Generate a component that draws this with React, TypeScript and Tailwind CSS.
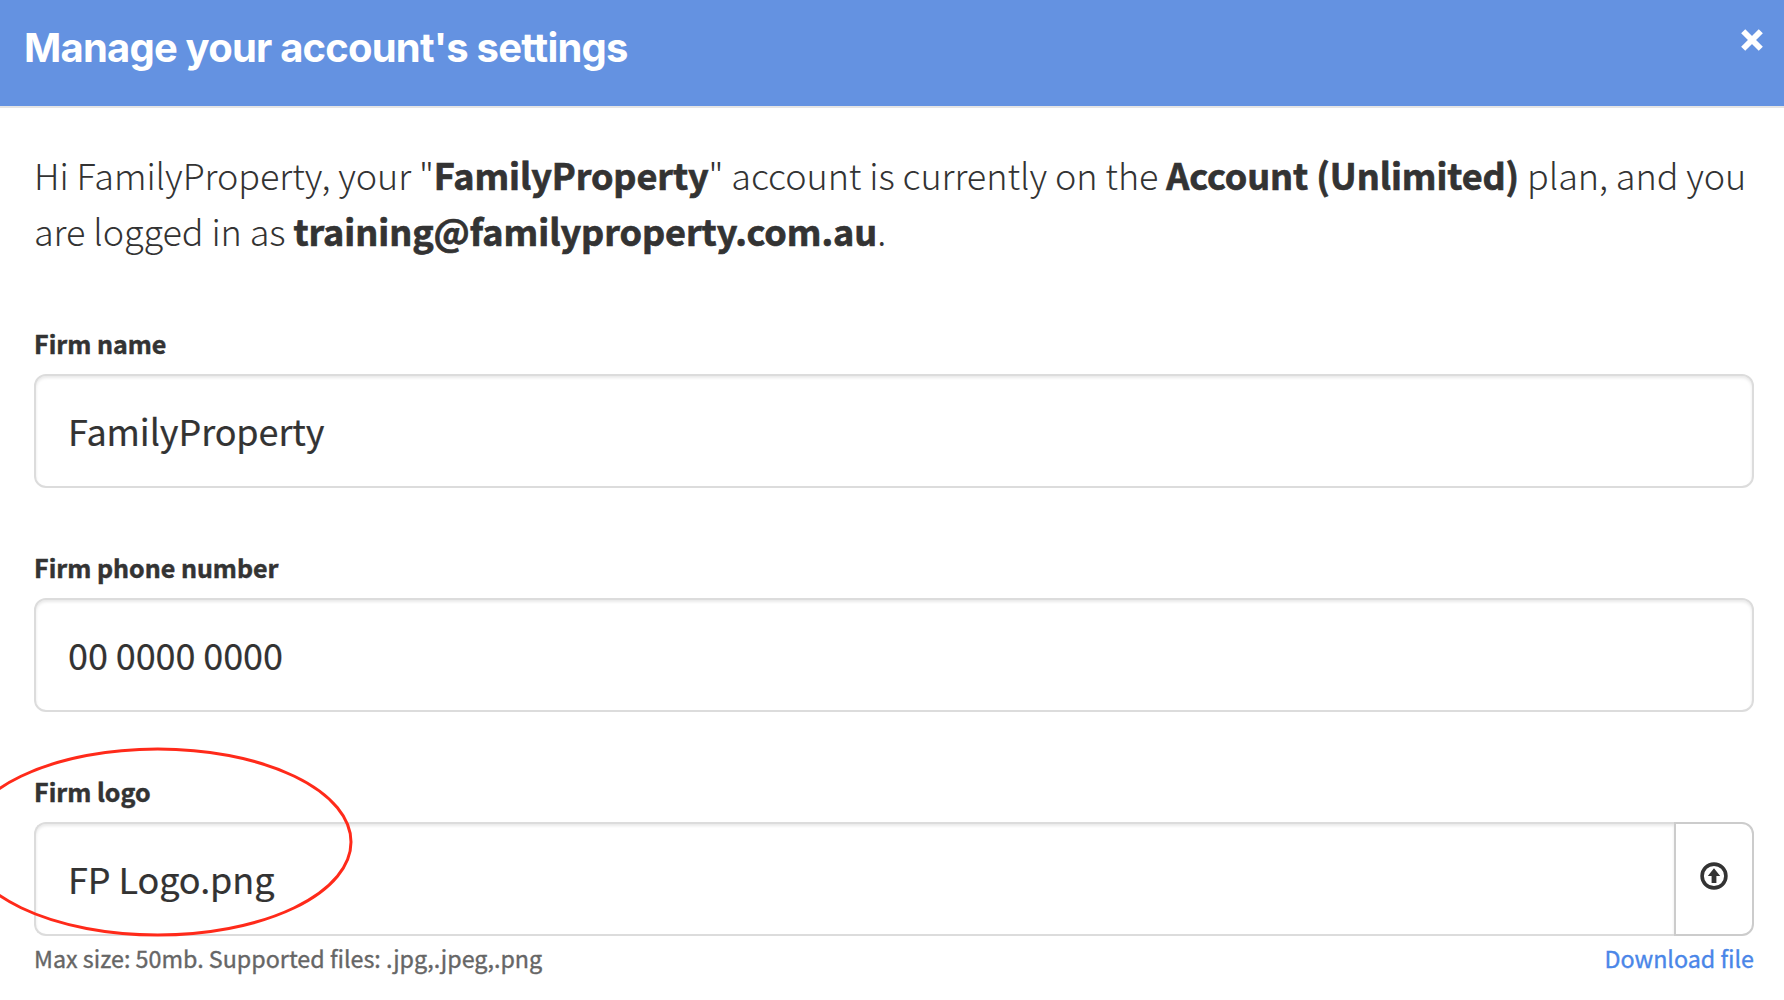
import React from 'react';

const inputClass =
  'block h-[114px] w-full rounded-xl border-2 border-[#dcdcdc] bg-white px-8 pb-[2px] text-[36px] tracking-[-0.09px] text-[#333] shadow-[inset_0_2px_3px_rgba(0,0,0,0.09)] outline-none [-webkit-text-stroke:0.2px]';

const labelClass = 'mb-[13px] block text-[25px] leading-9 font-bold [-webkit-text-stroke:0.5px]';

const strongClass = 'font-bold [-webkit-text-stroke:0.7px]';

const App = () => {
  return (
    <div className="relative h-[1000px] w-[1784px] overflow-hidden bg-white font-['Noto_Sans_CJK_SC','Open_Sans',sans-serif] text-[#333]">
      {/* Header */}
      <div className="flex h-[108px] items-start justify-between border-b-2 border-[#e5e5e5] bg-[#6492e1] pr-[21.5px] pl-6">
        <h1 className="mt-6 font-['Inter',sans-serif] text-[40px] leading-12 font-bold tracking-[-0.8px] text-white">
          Manage your account's settings
        </h1>
        <button type="button" aria-label="Close" className="mt-[29px]">
          <svg className="h-[22px] w-[22px]" viewBox="0 0 22 22" fill="none" stroke="white" strokeWidth="5.8">
            <path d="M2.2 2.2 19.8 19.8M19.8 2.2 2.2 19.8" />
          </svg>
        </button>
      </div>

      <div className="px-[34px] pt-[38px]">
        {/* Account summary */}
        <p className="text-[36px] leading-14 font-light tracking-[-0.08px] whitespace-nowrap">
          Hi FamilyProperty, your "<strong className={strongClass}>FamilyProperty</strong>" account is currently on the{' '}
          <strong className={strongClass}>Account (Unlimited)</strong> plan, and you
          <br />
          are logged in as <strong className={`${strongClass} tracking-[-0.04px]`}>training@familyproperty.com.au</strong>.
        </p>

        <form className="mt-[67px] flex w-[1720px] flex-col gap-[61px]">
          <div>
            <label htmlFor="name" className={labelClass}>Firm name</label>
            <input id="name" type="text" defaultValue="FamilyProperty" className={inputClass} />
          </div>

          <div>
            <label htmlFor="phone" className={labelClass}>Firm phone number</label>
            <input id="phone" type="text" defaultValue="00 0000 0000" className={inputClass} />
          </div>

          <div>
            <label htmlFor="logo" className={labelClass}>Firm logo</label>
            <div className="flex">
              <input id="logo" type="text" defaultValue="FP Logo.png" className={`${inputClass} flex-1 rounded-r-none border-r-0`} />
              <button
                type="button"
                aria-label="Upload"
                className="flex h-[114px] w-20 items-center justify-center rounded-r-xl border-2 border-[#ccc] bg-white pb-[6px]"
              >
                <svg className="h-7 w-7" viewBox="0 0 28 28">
                  <circle cx="14" cy="14" r="11.9" fill="none" stroke="#333" strokeWidth="3.6" />
                  <path d="M14 6.2 20.2 14H16.4V21H11.6V14H7.8Z" fill="#333" />
                </svg>
              </button>
            </div>
            <div className="mt-[5px] flex justify-between text-[23.3px] leading-[34px] [-webkit-text-stroke:0.35px]">
              <span className="text-[#666]">Max size: 50mb. Supported files: .jpg,.jpeg,.png</span>
              <a href="#" className="text-[#4a86e8]">Download file</a>
            </div>
          </div>
        </form>
      </div>

      {/* Highlight around the logo field */}
      <svg className="pointer-events-none absolute top-[740px] left-0 h-[204px] w-[360px]" viewBox="0 0 360 204">
        <ellipse cx="157.7" cy="102" rx="193.3" ry="93" fill="none" stroke="#ff2a1a" strokeWidth="3" />
      </svg>
    </div>
  );
};

export default App;
